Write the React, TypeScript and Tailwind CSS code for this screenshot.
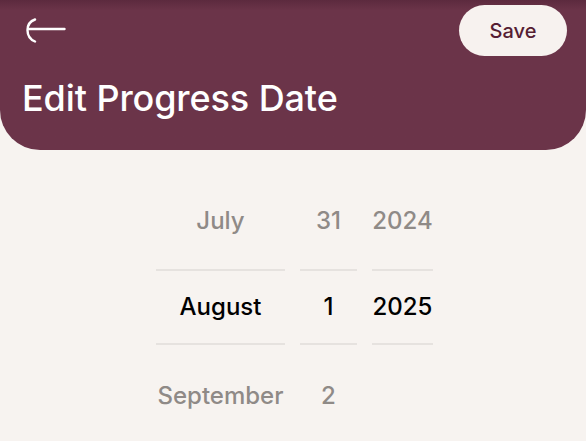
import React from "react";

const months = ["July", "August", "September"];
const days = ["31", "1", "2"];
const years = ["2024", "2025", ""];

const PickerColumn: React.FC<{ items: string[]; width: string }> = ({ items, width }) => {
	return (
		<div className={`flex flex-col ${width}`}>
			<div className="h-[44px] flex items-center justify-center text-[#8f8a87]">{items[0]}</div>
			<div className="mt-[26px] h-[76px] border-y-2 border-[#e6e2df] flex items-center justify-center text-black">
				{items[1]}
			</div>
			<div className="mt-[29px] h-[44px] flex items-center justify-center text-[#8f8a87]">{items[2]}</div>
		</div>
	);
};

export default function App() {
	return (
		<div
			className="w-[586px] h-[441px] overflow-hidden bg-[#f7f3f0]"
			style={{ fontFamily: "Inter, 'Noto Sans', sans-serif" }}>
			<div className="h-[150px] rounded-b-[40px] pt-[5px] pl-[22px] pr-[19px] bg-linear-to-b from-[#5c2a3e] to-[#6b3449] to-[7%]">
				<div className="flex items-center justify-between h-[51px]">
					<svg width="40" height="26" viewBox="0 0 40 26" className="ml-[4px]" fill="none">
						<path d="M9 1.5 C -1 5, -1 19, 9 23.5" stroke="white" strokeWidth="2.4" strokeLinecap="round" />
						<path d="M2 11 H 38.5" stroke="white" strokeWidth="2.4" strokeLinecap="round" />
					</svg>
					<button className="w-[108px] h-[51px] rounded-full bg-[#f7f2ef] text-[#561d33] text-[20px] font-medium">
						Save
					</button>
				</div>
				<h1 className="mt-[22px] text-white text-[36px] leading-[40px] font-medium tracking-[-0.1px]">
					Edit Progress Date
				</h1>
			</div>
			<div className="flex justify-center gap-[15px] pt-[49px] pl-[3px] text-[24px] font-medium">
				<PickerColumn items={months} width="w-[129px]" />
				<PickerColumn items={days} width="w-[57px]" />
				<PickerColumn items={years} width="w-[61px]" />
			</div>
		</div>
	);
}
